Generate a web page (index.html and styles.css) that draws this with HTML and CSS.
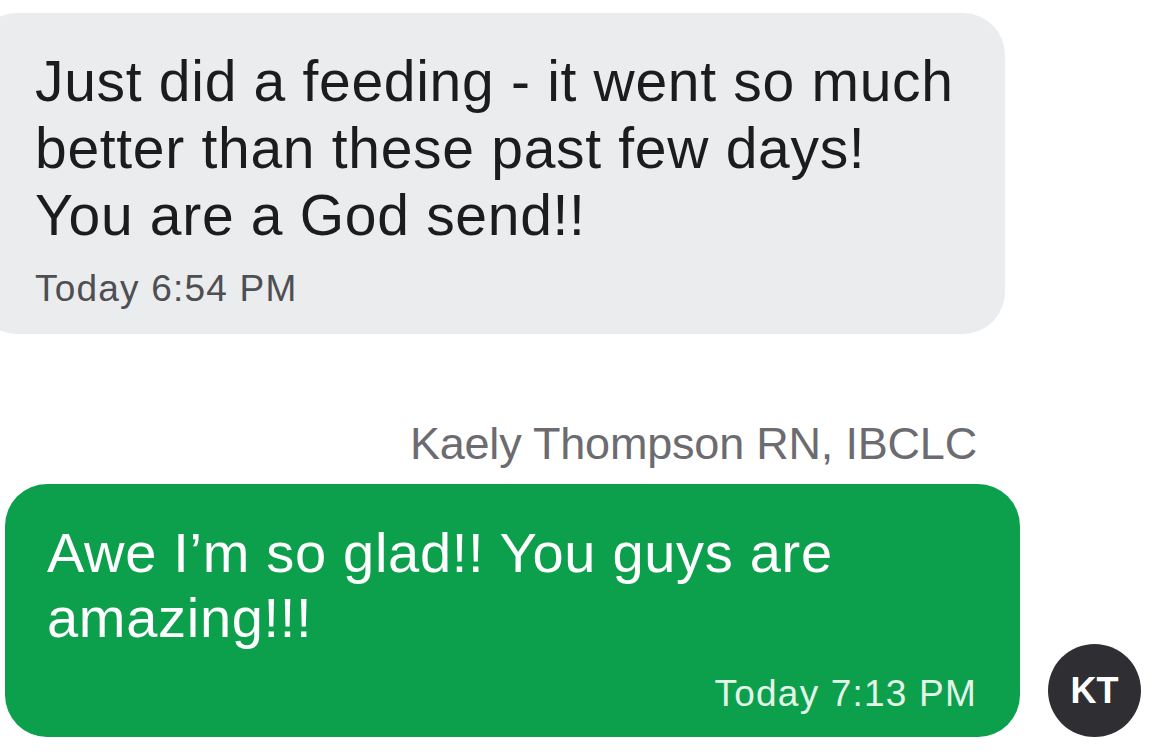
FILE: index.html
```html
<!DOCTYPE html>
<html lang="en">
<head>
<meta charset="utf-8">
<title>Messages</title>
<link rel="stylesheet" href="styles.css">
</head>
<body>
<div class="thread">
  <div class="msg incoming">
    <div class="bubble gray">
      <p class="text">Just did a feeding - it went so much<br>better than these past few days!<br>You are a God send!!</p>
      <div class="time">Today 6:54 PM</div>
    </div>
  </div>
  <div class="msg outgoing">
    <div class="out-col">
      <div class="sender">Kaely Thompson RN, IBCLC</div>
      <div class="bubble green">
        <p class="text">Awe I’m so glad!! You guys are<br>amazing!!!</p>
        <div class="time">Today 7:13 PM</div>
      </div>
    </div>
    <div class="avatar">KT</div>
  </div>
</div>
</body>
</html>
```

FILE: styles.css
```css
html, body {
  margin: 0;
  padding: 0;
  background: #ffffff;
}
body {
  width: 1170px;
  height: 755px;
  overflow: hidden;
  font-family: "Liberation Sans", Arial, sans-serif;
}
.thread {
  display: flex;
  flex-direction: column;
  padding-top: 13px;
}
.bubble {
  border-radius: 42px;
}
.text {
  margin: 0;
  letter-spacing: 0.7px;
}
.time {
  font-size: 37px;
  line-height: 40px;
  letter-spacing: 1.2px;
}
.incoming .bubble {
  margin-left: -25px;
  width: 1030px;
  box-sizing: border-box;
  padding: 35px 0 25px 60px;
  background: #ebecee;
  color: #1c1c1e;
}
.incoming .text {
  font-size: 57px;
  line-height: 67px;
}
.incoming .time {
  color: #4e4f53;
  margin-top: 20px;
}
.outgoing {
  display: flex;
  align-items: flex-end;
  margin-top: 85px;
  padding-left: 5px;
  gap: 28px;
}
.out-col {
  display: flex;
  flex-direction: column;
  width: 1015px;
}
.sender {
  align-self: flex-end;
  padding-right: 43px;
  font-size: 45px;
  line-height: 50px;
  letter-spacing: -0.2px;
  color: #6b6b70;
  margin-bottom: 15px;
}
.green {
  background: #0ca04c;
  color: #ffffff;
  padding: 36px 43px 23px 42px;
}
.green .text {
  font-size: 56px;
  line-height: 65px;
}
.green .time {
  text-align: right;
  color: #e3f5e9;
  margin-top: 24px;
}
.avatar {
  width: 93px;
  height: 93px;
  border-radius: 50%;
  background: #2f2f33;
  color: #ffffff;
  font-weight: bold;
  font-size: 36px;
  display: flex;
  align-items: center;
  justify-content: center;
}
```
